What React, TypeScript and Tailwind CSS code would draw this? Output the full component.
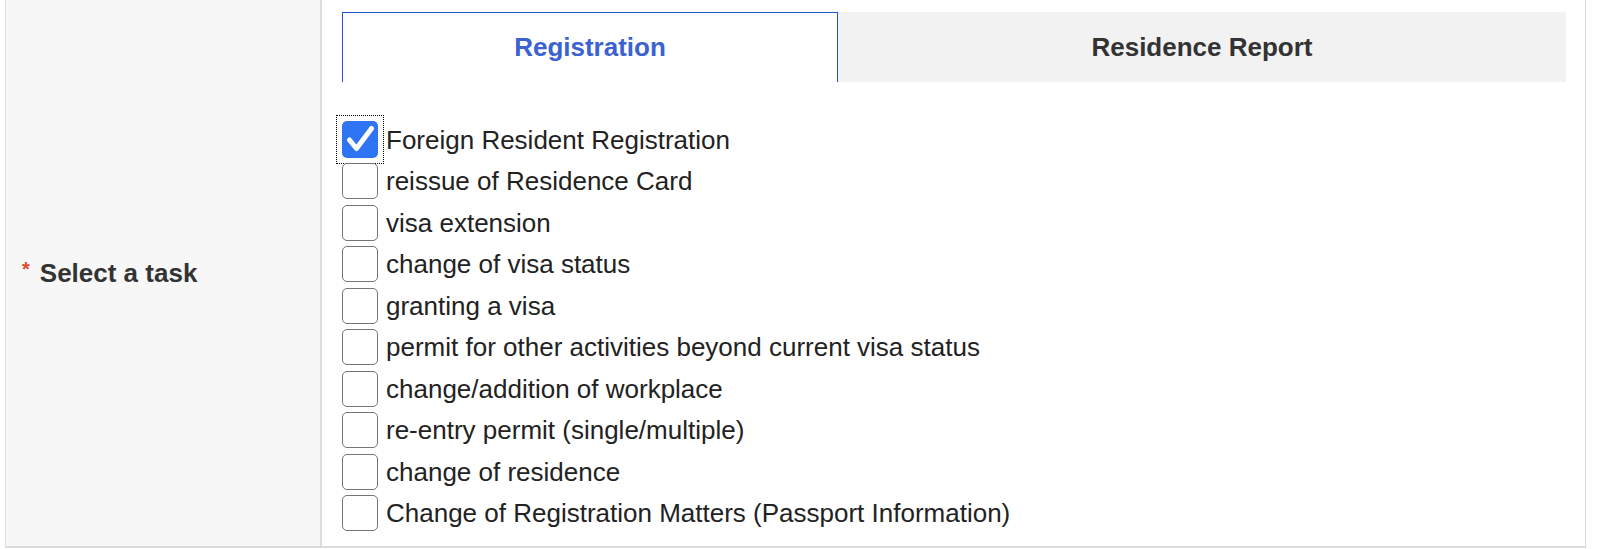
import React from "react";

const items = [
  "Foreign Resident Registration",
  "reissue of Residence Card",
  "visa extension",
  "change of visa status",
  "granting a visa",
  "permit for other activities beyond current visa status",
  "change/addition of workplace",
  "re-entry permit (single/multiple)",
  "change of residence",
  "Change of Registration Matters (Passport Information)",
];

function Box({ checked }: { checked: boolean }) {
  if (checked) {
    return (
      <div className="w-[36px] h-[37px] shrink-0 outline-1 outline-dotted outline-black outline-offset-[5px]">
        <div className="w-[36px] h-[37px] rounded-[5px] bg-[#2f74f2] flex items-center justify-center">
          <svg width="36" height="37" viewBox="0 0 36 37">
            <path d="M7.5 19 L14.5 27.5 L29.5 7.5" fill="none" stroke="white" strokeWidth="5" strokeLinecap="round" strokeLinejoin="round" />
          </svg>
        </div>
      </div>
    );
  }
  return <div className="w-[36px] h-[36px] shrink-0 rounded-[5px] border-[1.5px] border-[#757575] bg-white" />;
}

export default function App() {
  return (
    <div className="w-[1600px] h-[549px] bg-white pl-[5px] overflow-hidden" style={{ fontFamily: '"Liberation Sans", Arial, sans-serif' }}>
      <div className="w-[1581px] h-[548px] flex border-l border-r border-b-2 border-[#dcdcdc]">
        <div className="w-[316px] shrink-0 bg-[#f7f7f7] border-r-2 border-[#dcdcdc] flex items-center pl-[16px]">
          <span className="text-[#e4472c] text-[20px] font-bold leading-none self-center -mt-[8px] mr-[10px]">*</span>
          <span className="text-[26px] font-bold text-[#333]">Select a task</span>
        </div>
        <div className="flex-1 pl-[20px] pr-[19px] pt-[12px]">
          <div className="flex h-[70px]">
            <div className="w-[496px] border-t border-l border-r border-[#2255cc] bg-white flex items-center justify-center">
              <span className="text-[26px] font-bold text-[#3b62d0]">Registration</span>
            </div>
            <div className="flex-1 bg-[#f2f2f2] flex items-center justify-center">
              <span className="text-[26px] font-bold text-[#333]">Residence Report</span>
            </div>
          </div>
          <div className="mt-[37px] flex flex-col">
            {items.map((t, i) => (
              <div key={t} className="h-[41.5px] flex items-center">
                <Box checked={i === 0} />
                <span className="ml-[8px] text-[26px] text-[#222] leading-none">{t}</span>
              </div>
            ))}
          </div>
        </div>
      </div>
    </div>
  );
}
